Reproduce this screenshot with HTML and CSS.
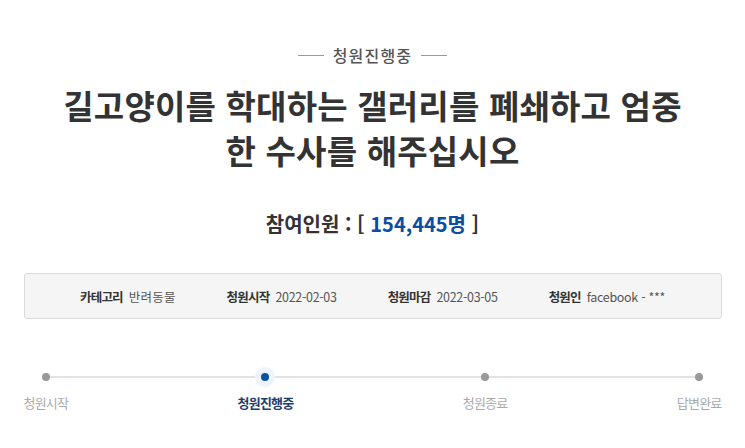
FILE: index.html
```html
<!DOCTYPE html>
<html lang="ko">
<head>
<meta charset="utf-8">
<title>청원진행중</title>
<link rel="stylesheet" href="styles.css">
</head>
<body>
<div class="page">
  <div class="status-tag"><span class="rule"></span><span class="tag-text">청원진행중</span><span class="rule"></span></div>
  <h1 class="title">길고양이를 학대하는 갤러리를 폐쇄하고 엄중한 수사를 해주십시오</h1>
  <p class="count">참여인원 : [ <span class="num">154,445명</span> ]</p>
  <ul class="info">
    <li class="info-item"><span class="label">카테고리</span><span class="value">반려동물</span></li>
    <li class="info-item"><span class="label">청원시작</span><span class="value num-value">2022-02-03</span></li>
    <li class="info-item"><span class="label">청원마감</span><span class="value num-value">2022-03-05</span></li>
    <li class="info-item"><span class="label">청원인</span><span class="value num-value">facebook - ***</span></li>
  </ul>
  <ol class="steps">
    <li class="step"><span class="dot-wrap"><span class="dot"></span></span><span class="step-label">청원시작</span></li>
    <li class="step active"><span class="dot-wrap"><span class="dot"></span></span><span class="step-label">청원진행중</span></li>
    <li class="step"><span class="dot-wrap"><span class="dot"></span></span><span class="step-label">청원종료</span></li>
    <li class="step"><span class="dot-wrap"><span class="dot"></span></span><span class="step-label">답변완료</span></li>
  </ol>
</div>
</body>
</html>
```

FILE: styles.css
```css
html, body {
  margin: 0;
  padding: 0;
  background: #fff;
}
body {
  font-family: "Noto Sans CJK KR", "Noto Sans", sans-serif;
  color: #333;
}
.page {
  width: 698px;
  margin: 0 auto;
  padding-top: 43px;
}
.status-tag {
  display: flex;
  justify-content: center;
  align-items: center;
  gap: 9px;
  height: 24px;
}
.rule {
  width: 26px;
  height: 1px;
  background: #999;
}
.tag-text {
  font-size: 16px;
  line-height: 24px;
  font-weight: 500;
  color: #555;
  letter-spacing: 1.2px;
}
.title {
  margin: 15.5px auto 0;
  width: 630px;
  font-size: 33px;
  line-height: 45px;
  font-weight: 700;
  text-align: center;
  color: #333;
  letter-spacing: 0.2px;
}
.count {
  margin: 36.5px 0 0;
  font-size: 20px;
  line-height: 30px;
  font-weight: 700;
  text-align: center;
  color: #333;
  letter-spacing: 0;
}
.count .num {
  color: #0c4da2;
}
.info {
  list-style: none;
  margin: 34px 0 0;
  padding: 0;
  height: 44px;
  border: 1px solid #dcdcdc;
  border-radius: 3px;
  background: #f5f5f5;
  display: flex;
  justify-content: center;
  align-items: center;
  gap: 51px;
  font-size: 12.5px;
}
.info-item {
  display: flex;
  gap: 6px;
  align-items: center;
}
.label {
  font-weight: 700;
  color: #333;
  letter-spacing: -0.8px;
}
.value {
  color: #555;
  letter-spacing: 0.2px;
}
.num-value {
  letter-spacing: -0.3px;
}
.steps {
  list-style: none;
  margin: 48px 0 0;
  padding: 0;
  display: flex;
  justify-content: space-between;
  position: relative;
}
.steps::before {
  content: "";
  position: absolute;
  left: 22px;
  right: 22px;
  top: 9px;
  height: 2px;
  background: #e2e2e2;
}
.step {
  display: flex;
  flex-direction: column;
  align-items: center;
  position: relative;
}
.dot-wrap {
  width: 20px;
  height: 20px;
  border-radius: 50%;
  display: flex;
  align-items: center;
  justify-content: center;
}
.dot {
  width: 8px;
  height: 8px;
  border-radius: 50%;
  background: #999;
}
.step-label {
  margin-top: 6px;
  font-size: 13px;
  line-height: 20px;
  color: #aaa;
  letter-spacing: -0.8px;
}
.step.active .dot-wrap {
  background: #eef4fb;
}
.step.active .dot {
  background: #0b4ea2;
}
.step.active .step-label {
  font-weight: 700;
  color: #1f3d6e;
}
```
